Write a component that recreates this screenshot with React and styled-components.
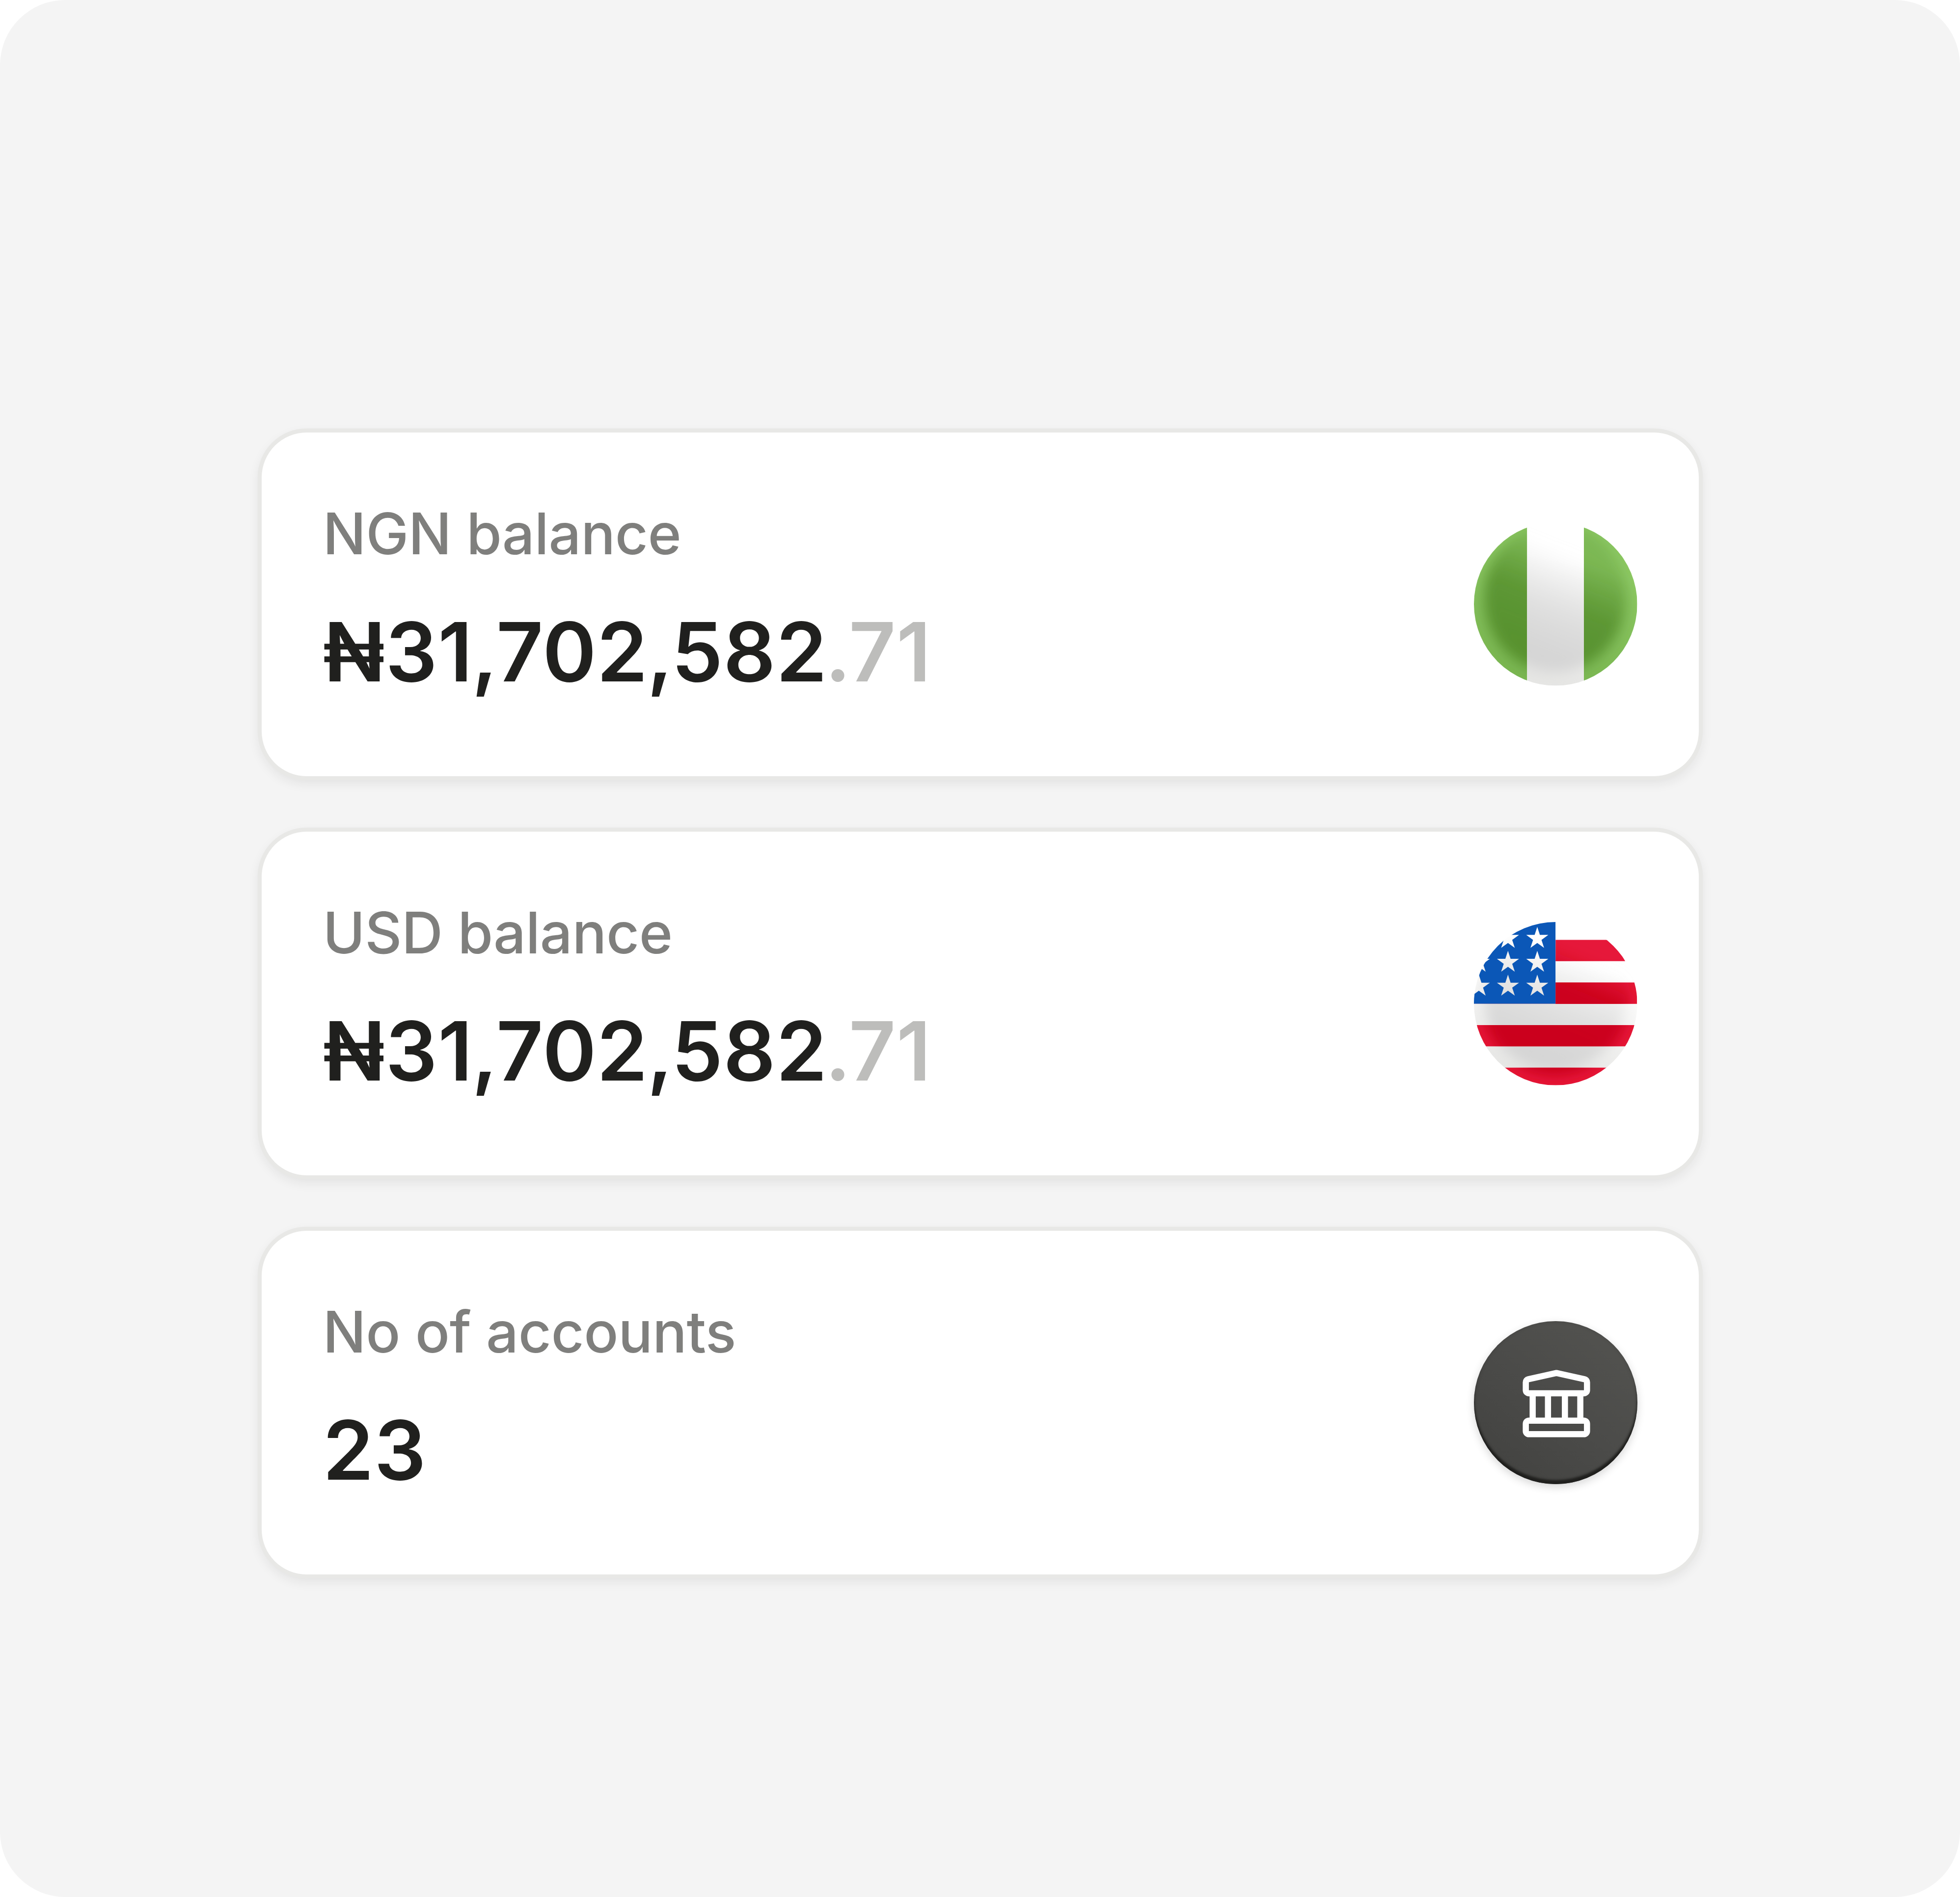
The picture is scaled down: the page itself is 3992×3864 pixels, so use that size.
import React from "react";
import styled, { createGlobalStyle } from "styled-components";

const GlobalStyle = createGlobalStyle`
  *, *::before, *::after { box-sizing: border-box; }
  body { margin: 0; background: #ffffff; }
`;

const Stage = styled.main`
  width: 3992px;
  height: 3864px;
  padding: 880.5px 532.5px 0;
  border-radius: 133px;
  background: #f4f4f4;
  font-family: Inter, "Liberation Sans", sans-serif;
`;

const CardList = styled.div`
  display: flex;
  flex-direction: column;
  gap: 112.7px;
`;

const Card = styled.section`
  display: flex;
  align-items: center;
  justify-content: space-between;
  height: 700.5px;
  padding: 0 125px;
  border-radius: 91.5px;
  background: #ffffff;
  box-shadow:
    0 0 0 8.3px #e8e8e6,
    0 8.3px 25px 4px rgba(30, 30, 28, 0.09);
`;

const CardText = styled.div`
  display: flex;
  flex-direction: column;
  gap: 70px;
  padding-bottom: 17px;
`;

const Label = styled.div`
  font-size: 116.4px;
  font-weight: 500;
  line-height: 141px;
  letter-spacing: -0.38px;
  color: #7f7f7d;
  white-space: nowrap;
`;

const Amount = styled.div`
  font-size: 166.3px;
  font-weight: 600;
  line-height: 201.4px;
  letter-spacing: 1px;
  color: #20201e;
  white-space: nowrap;
`;

const Separator = styled.span`
  margin: 0 -4.2px 0 -2.4px;
`;

const Fraction = styled.span`
  color: #bdbdbb;
`;

const Point = styled.span`
  margin: 0 -5.1px 0 -5.4px;
`;

const Emblem = styled.svg`
  display: block;
  flex: none;
  overflow: visible;
  width: 332.67px;
  height: 332.67px;
`;

const IconBadge = styled.div`
  flex: none;
  width: 332.67px;
  height: 332.67px;
  border-radius: 50%;
  background: linear-gradient(40deg, #434341 12%, #4b4b49 50%, #52524f 88%);
  box-shadow:
    inset 0 -8.3px 4px 0 #20201e,
    inset 0 0 8px rgba(0, 0, 0, 0.12),
    0 6px 17px rgba(0, 0, 0, 0.16);
`;

/* One colour of a glossy disc: a lit base with a soft darker body over it. */
function Gloss({ id, top, bottom, dark, start = 0, knee = 0.6, level = 0.85, reach = 0 }) {
  return (
    <>
      <linearGradient id={`${id}-base`} x1="0.65" y1="0" x2="0.4" y2="1">
        <stop offset="0.25" stopColor={top} />
        <stop offset="0.95" stopColor={bottom} />
      </linearGradient>
      <linearGradient id={`${id}-dark`} gradientUnits="userSpaceOnUse" x1="18" y1="-46" x2="-223" y2="557">
        <stop offset="0" stopColor={dark} stopOpacity={start} />
        <stop offset={knee} stopColor={dark} stopOpacity={level} />
        <stop offset="1" stopColor={dark} stopOpacity="1" />
      </linearGradient>
      <rect width="998" height="998" fill={`url(#${id}-base)`} />
      <ellipse
        cx="495"
        cy="458"
        rx={435 + reach}
        ry={458 + reach}
        fill={`url(#${id}-dark)`}
        filter="url(#soften)"
      />
    </>
  );
}

function SharedDefs() {
  return (
    <defs>
      <clipPath id="disc">
        <circle cx="499" cy="499" r="499" />
      </clipPath>
      <filter id="soften" x="-30%" y="-30%" width="160%" height="160%">
        <feGaussianBlur stdDeviation="38" />
      </filter>
    </defs>
  );
}

function NigeriaFlag() {
  return (
    <Emblem viewBox="0 0 998 998" aria-label="Nigeria">
      <SharedDefs />
      <clipPath id="ng-sides">
        <rect width="325" height="998" />
        <rect x="672" width="326" height="998" />
      </clipPath>
      <clipPath id="ng-middle">
        <rect x="325" width="347" height="998" />
      </clipPath>
      <g clipPath="url(#disc)">
        <g clipPath="url(#ng-sides)">
          <Gloss id="ng-green" top="#8cc864" bottom="#7ab652" dark="#58922f" start={0.3} knee={0.5} level={0.9} />
        </g>
        <g clipPath="url(#ng-middle)">
          <Gloss id="ng-white" top="#ffffff" bottom="#e6e6e4" dark="#d5d5d5" level={0.68} />
        </g>
      </g>
    </Emblem>
  );
}

const STAR = "0,-71 16,-22 67.5,-22 25.8,8.4 41.7,57 0,27 -41.7,57 -25.8,8.4 -67.5,-22 -16,-22";
const STAR_COLUMNS = [30, 208, 387];
const STAR_ROWS = [101, 247, 393];
const RED_STRIPES = [109, 370, 630, 890];

function UsFlag() {
  return (
    <Emblem viewBox="0 0 998 998" aria-label="United States">
      <clipPath id="us-red">
        {RED_STRIPES.map((y) => (
          <rect key={y} y={y} width="998" height="130" />
        ))}
      </clipPath>
      <mask id="us-canton">
        <rect width="499" height="500" fill="#fff" />
        {STAR_ROWS.map((y) =>
          STAR_COLUMNS.map((x) => (
            <polygon key={`${x}-${y}`} points={STAR} transform={`translate(${x} ${y})`} fill="#000" />
          ))
        )}
      </mask>
      <clipPath id="us-fly">
        <path d="M499 0H998V998H0V500H499Z" />
      </clipPath>
      <g clipPath="url(#disc)">
        <Gloss id="us-white" top="#ffffff" bottom="#e6e6e4" dark="#d5d5d5" level={0.68} />
        <g clipPath="url(#us-fly)">
          <g clipPath="url(#us-red)">
            <Gloss
              id="us-stripe"
              top="#e6183a"
              bottom="#e61538"
              dark="#cb001a"
              knee={0.3}
              level={0.95}
              reach={22}
            />
          </g>
        </g>
        <rect width="499" height="500" fill="#0b57b7" mask="url(#us-canton)" />
      </g>
    </Emblem>
  );
}

function BankIcon() {
  return (
    <Emblem viewBox="65 62 998 998" fill="none" stroke="#fff" strokeWidth="37.5" aria-hidden="true">
      <path
        strokeLinejoin="round"
        d="M401 503A19 19 0 0 1 382 484V435.500A19 19 0 0 1 397 417L569 379L741 417A19 19 0 0 1 756 435.500V484A19 19 0 0 1 737 503Z"
      />
      <path d="M424 503V670M517.500 503V670M621 503V670M715 503V670" />
      <rect x="382" y="670" width="374" height="83" rx="19" />
    </Emblem>
  );
}

function StatCard({ label, value, fraction, children }) {
  return (
    <Card>
      <CardText>
        <Label>{label}</Label>
        <Amount>
          {value.split(",").map((group, i) => (
            <React.Fragment key={i}>
              {i > 0 && <Separator>,</Separator>}
              {group}
            </React.Fragment>
          ))}
          {fraction && (
            <Fraction>
              <Point>.</Point>
              {fraction}
            </Fraction>
          )}
        </Amount>
      </CardText>
      {children}
    </Card>
  );
}

export default function App() {
  return (
    <>
      <GlobalStyle />
      <Stage>
        <CardList>
          <StatCard label="NGN balance" value="₦31,702,582" fraction="71">
            <NigeriaFlag />
          </StatCard>
          <StatCard label="USD balance" value="₦31,702,582" fraction="71">
            <UsFlag />
          </StatCard>
          <StatCard label="No of accounts" value="23">
            <IconBadge>
              <BankIcon />
            </IconBadge>
          </StatCard>
        </CardList>
      </Stage>
    </>
  );
}
